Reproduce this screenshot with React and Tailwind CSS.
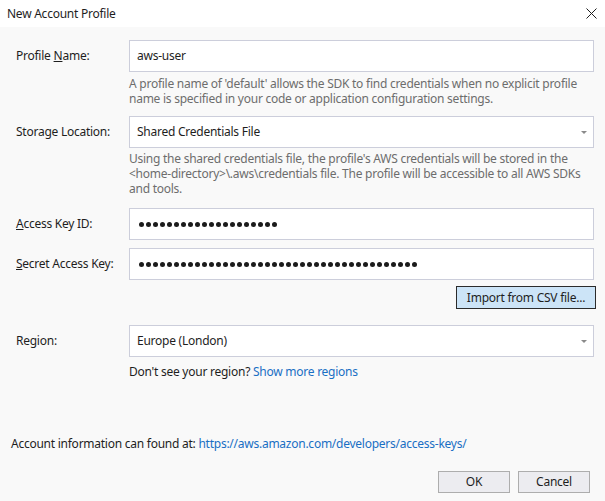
import React from "react";

function Dots({ n }) {
  return (
    <div className="flex items-center gap-[2px]">
      {Array.from({ length: n }).map((_, i) => (
        <span key={i} className="block w-[5px] h-[5px] rounded-full bg-[#1b1b1b]" />
      ))}
    </div>
  );
}

function Arrow() {
  return (
    <svg width="6" height="3" viewBox="0 0 6 3" className="mr-[6px]">
      <path d="M0 0 L6 0 L3 3 Z" fill="#8a8a8a" />
    </svg>
  );
}

export default function App() {
  return (
    <div
      className="w-[605px] h-[501px] bg-[#f9f9f9] text-[#1e1e1e] text-[12px] tracking-[-0.25px] flex flex-col overflow-hidden"
      style={{ fontFamily: '"Noto Sans", "Open Sans", sans-serif' }}
    >
      <div className="h-[27px] bg-white flex items-center justify-between pl-[7px] pr-[8px] shrink-0">
        <span className="leading-[15px]">New Account Profile</span>
        <svg width="11" height="11" viewBox="0 0 11 11">
          <path d="M0.5 0.5 L10.5 10.5 M10.5 0.5 L0.5 10.5" stroke="#1e1e1e" strokeWidth="1" />
        </svg>
      </div>

      <div className="flex-1 pl-[16px] pr-[11px] pt-[13px]">
        <div className="grid grid-cols-[113px_1fr]">
          <div className="h-[32px] flex items-center">
            Profile <span className="underline ml-[3px]">N</span>ame:
          </div>
          <div className="h-[32px] bg-white border border-[#cccedb] flex items-center pl-[7px]">aws-user</div>

          <div />
          <div className="mt-[4px] text-[#6d6d6d] leading-[15px]">
            A profile name of 'default' allows the SDK to find credentials when no explicit profile name is specified in your code or application configuration settings.
          </div>

          <div className="mt-[10px] h-[32px] flex items-center">Storage Location:</div>
          <div className="mt-[10px] h-[32px] bg-white border border-[#cccedb] flex items-center justify-between pl-[7px]">
            <span>Shared Credentials File</span>
            <Arrow />
          </div>

          <div />
          <div className="mt-[3px] text-[#6d6d6d] leading-[15px]">
            Using the shared credentials file, the profile's AWS credentials will be stored in the &lt;home-directory&gt;\.aws\credentials file. The profile will be accessible to all AWS SDKs and tools.
          </div>

          <div className="mt-[12px] h-[32px] flex items-center">
            <span className="underline">A</span>ccess Key ID:
          </div>
          <div className="mt-[12px] h-[32px] bg-white border border-[#cccedb] flex items-center pl-[9px]">
            <Dots n={20} />
          </div>

          <div className="mt-[8px] h-[32px] flex items-center">
            <span className="underline">S</span>ecret Access Key:
          </div>
          <div className="mt-[8px] h-[32px] bg-white border border-[#cccedb] flex items-center pl-[9px]">
            <Dots n={40} />
          </div>

          <div />
          <div className="mt-[6px] flex justify-end -mr-[2px]">
            <button className="w-[140px] h-[23px] bg-[#cce4f7] border border-[#2b2b2b] flex items-center justify-center">
              Import from CSV file...
            </button>
          </div>

          <div className="mt-[16px] h-[32px] flex items-center">Region:</div>
          <div className="mt-[16px] h-[32px] bg-white border border-[#cccedb] flex items-center justify-between pl-[7px]">
            <span>Europe (London)</span>
            <Arrow />
          </div>

          <div />
          <div className="mt-[7px] leading-[15px]">
            Don't see your region? <span className="text-[#1a6fc4]">Show more regions</span>
          </div>
        </div>
      </div>

      <div className="pl-[11px] pr-[15px] pb-[8px] shrink-0">
        <div className="leading-[15px]">
          Account information can found at:{" "}
          <span className="text-[#1a6fc4]">https://aws.amazon.com/developers/access-keys/</span>
        </div>
        <div className="mt-[20px] flex justify-end gap-[8px]">
          <button className="w-[72px] h-[22px] bg-[#ececf0] border border-[#adadad] flex items-center justify-center">OK</button>
          <button className="w-[72px] h-[22px] bg-[#ececf0] border border-[#adadad] flex items-center justify-center">Cancel</button>
        </div>
      </div>
    </div>
  );
}
